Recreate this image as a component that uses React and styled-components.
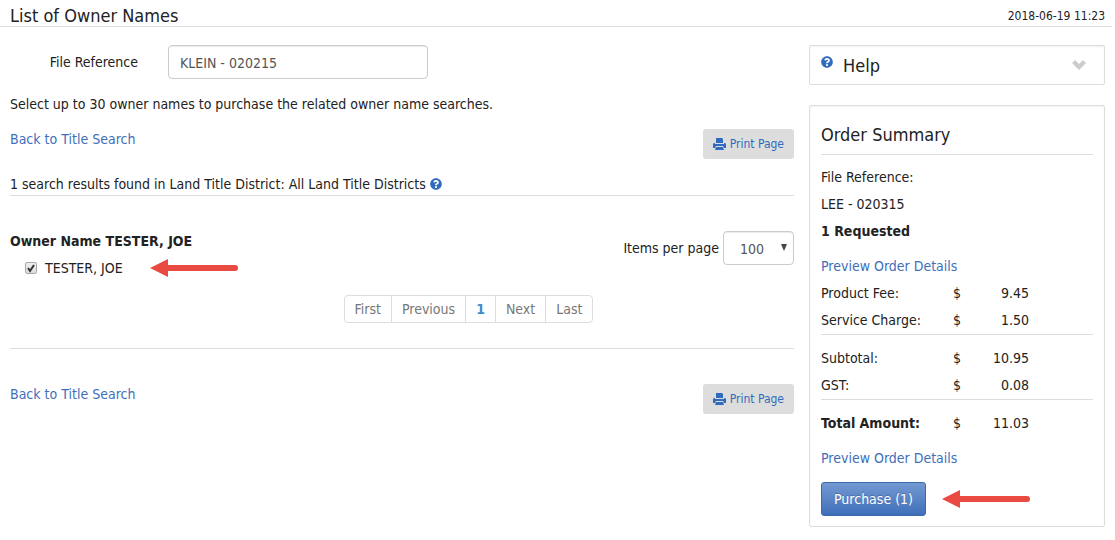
import React from 'react';
import styled, { createGlobalStyle, css } from 'styled-components';
import { FaQuestionCircle } from 'react-icons/fa';

const fees = [
  { label: 'Product Fee:', amount: '9.45' },
  { label: 'Service Charge:', amount: '1.50', last: true },
  { label: 'Subtotal:', amount: '10.95', first: true },
  { label: 'GST:', amount: '0.08' },
  { label: 'Total Amount:', amount: '11.03', first: true, bold: true },
];

const pages = ['First', 'Previous', '1', 'Next', 'Last'];

const PrintIcon = () => (
  <svg width="13" height="13" viewBox="0 0 13 13" fill="currentColor" aria-hidden="true">
    <path d="M3 0h6l1 1v4H3z" />
    <path d="M1 5h1v1h9V5h1l1 1v4h-2l-1-2H3l-1 2H0V6z" />
    <path d="M3 9h7l1 3H2z" />
  </svg>
);

const ArrowIcon = () => (
  <Arrow width="89" height="20" viewBox="0 0 89 20" aria-hidden="true">
    <path d="M0 10L18 1v18z" />
    <rect x="15" y="7" width="73" height="6" rx="3" />
  </Arrow>
);

const BackRow = () => (
  <LinkRow>
    <Link href="#search">Back to Title Search</Link>
    <PrintButton type="button">
      <PrintIcon />
      Print Page
    </PrintButton>
  </LinkRow>
);

const App = () => {
  return (
    <>
      <GlobalStyle />
      <Header>
        <Title>List of Owner Names</Title>
        <Time>2018-06-19 11:23</Time>
      </Header>
      <Page>
        <main>
          <Field>
            <FieldLabel htmlFor="reference">File Reference</FieldLabel>
            <TextInput id="reference" type="text" defaultValue="KLEIN - 020215" />
          </Field>
          <Intro>Select up to 30 owner names to purchase the related owner name searches.</Intro>
          <BackRow />
          <Found>
            1 search results found in Land Title District: All Land Title Districts
            <FaQuestionCircle size={12} color="#316bbe" />
          </Found>
          <Results>
            <div>
              <Owner>Owner Name TESTER, JOE</Owner>
              <OwnerRow>
                <CheckWrap>
                  <Checkbox id="tester" type="checkbox" defaultChecked />
                  <svg width="12" height="12" viewBox="0 0 12 12" aria-hidden="true">
                    <path d="M3 6l2 3 4-6" fill="none" stroke="#333" strokeWidth="2" />
                  </svg>
                </CheckWrap>
                <label htmlFor="tester">TESTER, JOE</label>
                <ArrowIcon />
              </OwnerRow>
            </div>
            <PerPage>
              <label htmlFor="items">Items per page</label>
              <SelectWrap>
                <Select id="items" defaultValue="100">
                  <option>100</option>
                </Select>
                <svg width="6" height="7" viewBox="0 0 6 7" aria-hidden="true">
                  <path d="M0 0h6L3 7z" fill="#444" />
                </svg>
              </SelectWrap>
            </PerPage>
          </Results>
          <Pagination>
            {pages.map((page) => (
              <li key={page}>
                <PageLink href="#page" $current={page === '1'}>
                  {page}
                </PageLink>
              </li>
            ))}
          </Pagination>
          <BackRow />
        </main>
        <Sidebar>
          <HelpBox type="button">
            <FaQuestionCircle size={12} color="#316bbe" />
            <span>Help</span>
            <svg width="14" height="10" viewBox="0 0 14 10" aria-hidden="true">
              <path d="M0 3l3-3 4 4 4-4 3 3-7 7z" fill="#ccc" />
            </svg>
          </HelpBox>
          <Summary>
            <SummaryTitle>Order Summary</SummaryTitle>
            <Line>File Reference:</Line>
            <Line>LEE - 020315</Line>
            <Line>
              <b>1 Requested</b>
            </Line>
            <Preview href="#preview">Preview Order Details</Preview>
            <Fees>
              <tbody>
                {fees.map(({ label, amount, first, bold }) => (
                  <FeeRow key={label} $first={first}>
                    <FeeLabel scope="row" $bold={bold}>
                      {label}
                    </FeeLabel>
                    <Currency>$</Currency>
                    <Amount>{amount}</Amount>
                    <td />
                  </FeeRow>
                ))}
              </tbody>
            </Fees>
            <Preview href="#preview">Preview Order Details</Preview>
            <Actions>
              <Purchase type="button">Purchase (1)</Purchase>
              <ArrowIcon />
            </Actions>
          </Summary>
        </Sidebar>
      </Page>
    </>
  );
};

export default App;

const GlobalStyle = createGlobalStyle`
  * {
    box-sizing: border-box;
  }
  body {
    margin: 0;
    background: #fff;
    color: #222;
    font-family: Tahoma, 'DejaVu Sans Condensed', 'Noto Sans', sans-serif;
    font-size: 14px;
    line-height: 20px;
  }
  button, input, select {
    font-family: inherit;
    font-size: 14px;
  }
`;

const Header = styled.header`
  display: flex;
  justify-content: space-between;
  align-items: center;
  height: 27px;
  margin-right: 3px;
  padding: 6px 7px 0 10px;
  border-bottom: 1px solid #ddd;
`;

const Title = styled.h1`
  margin: 0;
  font-size: 18px;
  font-weight: normal;
  line-height: 20px;
`;

const Time = styled.time`
  font-size: 12px;
`;

const Page = styled.div`
  display: grid;
  grid-template-columns: minmax(0, 1fr) 296px;
  gap: 15px;
  align-items: start;
  padding: 18px 10px 12px;
`;

const Field = styled.div`
  display: flex;
  align-items: center;
`;

const FieldLabel = styled.label`
  width: 158px;
  padding-right: 30px;
  text-align: right;
`;

const TextInput = styled.input`
  width: 260px;
  height: 34px;
  padding: 2px 11px 0;
  border: 1px solid #ccc;
  border-radius: 4px;
  box-shadow: inset 0 1px 1px rgba(0, 0, 0, 0.08);
  color: #555;
`;

const Intro = styled.p`
  margin: 15px 0;
`;

const Link = styled.a`
  color: #3f6fba;
  text-decoration: none;
`;

const LinkRow = styled.div`
  display: flex;
  justify-content: space-between;
  align-items: flex-start;
`;

const PrintButton = styled.button`
  display: flex;
  align-items: center;
  gap: 4px;
  height: 30px;
  padding: 0 10px;
  border: none;
  border-radius: 3px;
  background: #ddd;
  color: #316bbe;
  font-size: 12px;
  cursor: pointer;
`;

const Found = styled.p`
  display: flex;
  align-items: center;
  gap: 4px;
  margin: 15px 0 0;
  padding-bottom: 1px;
  border-bottom: 1px solid #ddd;
`;

const Results = styled.section`
  display: flex;
  justify-content: space-between;
  align-items: flex-start;
  padding-top: 35px;
`;

const Owner = styled.h2`
  margin: 0;
  font-size: 14px;
  line-height: 20px;
`;

const OwnerRow = styled.div`
  display: flex;
  align-items: center;
  margin-top: 7px;
  padding-left: 15px;

  > svg {
    margin-left: 27px;
  }
`;

const CheckWrap = styled.span`
  position: relative;
  width: 12px;
  height: 12px;
  margin-right: 8px;

  svg {
    position: absolute;
    top: 0;
    left: 0;
    display: none;
    pointer-events: none;
  }
  input:checked + svg {
    display: block;
  }
`;

const Checkbox = styled.input`
  display: block;
  appearance: none;
  width: 12px;
  height: 12px;
  margin: 0;
  border: 1px solid #aaa;
  border-radius: 2px;
  background: linear-gradient(#eee, #ddd);
`;

const PerPage = styled.div`
  display: flex;
  align-items: center;
  gap: 4px;
`;

const SelectWrap = styled.span`
  position: relative;

  svg {
    position: absolute;
    top: 13px;
    right: 7px;
    pointer-events: none;
  }
`;

const Select = styled.select`
  appearance: none;
  display: block;
  width: 71px;
  height: 34px;
  padding: 2px 16px 0;
  border: 1px solid #ccc;
  border-radius: 4px;
  background: #fff;
  box-shadow: inset 0 1px 1px rgba(0, 0, 0, 0.08);
  color: #555;
`;

const Pagination = styled.ul`
  display: flex;
  justify-content: center;
  margin: 0 0 35px;
  padding: 17px 0 25px 133px;
  border-bottom: 1px solid #ddd;
  list-style: none;

  li:first-child a {
    margin-left: 0;
    border-radius: 4px 0 0 4px;
  }
  li:last-child a {
    border-radius: 0 4px 4px 0;
  }
`;

const PageLink = styled.a`
  display: block;
  height: 28px;
  margin-left: -1px;
  padding: 3px 10px;
  border: 1px solid #ddd;
  color: #777;
  text-decoration: none;
  ${({ $current }) =>
    $current &&
    css`
      color: #428bca;
      font-weight: bold;
    `}
`;

const Sidebar = styled.aside`
  display: flex;
  flex-direction: column;
  gap: 20px;
`;

const HelpBox = styled.button`
  display: flex;
  align-items: center;
  height: 40px;
  padding: 0 18px 0 11px;
  border: 1px solid #ddd;
  border-radius: 2px;
  background: #fff;
  box-shadow: inset 0 1px 2px rgba(0, 0, 0, 0.06);
  color: #222;
  text-align: left;

  span {
    flex: 1;
    margin-left: 10px;
    font-size: 18px;
  }
  svg:first-child {
    margin-bottom: 6px;
  }
`;

const Summary = styled.section`
  padding: 17px 11px 10px;
  border: 1px solid #ddd;
  border-radius: 2px;
  box-shadow: inset 0 1px 2px rgba(0, 0, 0, 0.06);
`;

const SummaryTitle = styled.h2`
  margin: 0 0 9px;
  padding-bottom: 7px;
  border-bottom: 1px solid #ddd;
  font-size: 18px;
  font-weight: normal;
  line-height: 24px;
`;

const Line = styled.p`
  margin: 0;
  line-height: 27px;
`;

const Preview = styled(Link)`
  display: block;
  margin-top: 8px;
  line-height: 27px;
`;

const Fees = styled.table`
  width: 100%;
  border-collapse: separate;
  border-spacing: 0;
  line-height: 27px;

  th, td {
    padding: 0;
  }
`;

const FeeRow = styled.tr`
  ${({ $first }) =>
    $first &&
    css`
      th, td {
        padding-top: 10px;
        border-top: 1px solid #ddd;
      }
    `}
`;

const FeeLabel = styled.th`
  width: 132px;
  font-weight: ${({ $bold }) => ($bold ? 'bold' : 'normal')};
  text-align: left;
`;

const Currency = styled.td`
  width: 16px;
`;

const Amount = styled.td`
  width: 60px;
  text-align: right;
`;

const Actions = styled.div`
  display: flex;
  align-items: center;
  gap: 16px;
  margin-top: 10px;
`;

const Purchase = styled.button`
  height: 34px;
  padding: 0 12px;
  border: 1px solid #3d68ac;
  border-radius: 3px;
  background: linear-gradient(#7399d1, #406fba);
  color: #fff;
  text-shadow: 0 -1px 0 rgba(0, 0, 0, 0.2);
  cursor: pointer;
`;

const Arrow = styled.svg`
  fill: #e94b43;
`;
